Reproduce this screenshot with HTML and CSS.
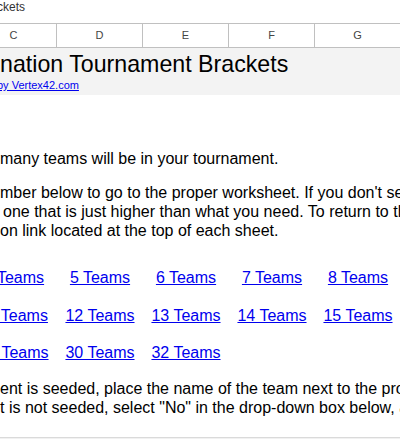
FILE: index.html
```html
<!DOCTYPE html>
<html lang="en">
<head>
    <meta charset="UTF-8">
    <meta name="viewport" content="width=device-width, initial-scale=1.0">
    <title>Single Elimination Tournament Brackets</title>
    <link rel="stylesheet" href="styles.css">
</head>
<body>
    <div class="doc-title"><span>ckets</span></div>

    <div class="sheet">
        <!-- column letters -->
        <div class="col-head">
            <div class="col">C</div>
            <div class="col">D</div>
            <div class="col">E</div>
            <div class="col">F</div>
            <div class="col">G</div>
        </div>

        <div class="banner">
            <h1 class="banner-title">nation Tournament Brackets</h1>
            <a class="banner-link" href="#">by Vertex42.com</a>
        </div>

        <div class="content">
            <p class="step step-one">many teams will be in your tournament.</p>

            <p class="step step-two">
                <span class="line">mber below to go to the proper worksheet. If you don't see the exact</span>
                <span class="line indent">one that is just higher than what you need. To return to this page</span>
                <span class="line">on link located at the top of each sheet.</span>
            </p>

            <div class="team-links">
                <a href="#">4 Teams</a>
                <a href="#">5 Teams</a>
                <a href="#">6 Teams</a>
                <a href="#">7 Teams</a>
                <a href="#">8 Teams</a>

                <a href="#">11 Teams</a>
                <a href="#">12 Teams</a>
                <a href="#">13 Teams</a>
                <a href="#">14 Teams</a>
                <a href="#">15 Teams</a>

                <a href="#">24 Teams</a>
                <a href="#">30 Teams</a>
                <a href="#">32 Teams</a>
            </div>

            <p class="step step-note">
                <span class="line">ent is seeded, place the name of the team next to the proper seed</span>
                <span class="line">t is not seeded, select "No" in the drop-down box below, and</span>
            </p>
        </div>
    </div>

    <div class="footer"></div>
</body>
</html>
```

FILE: styles.css
```css
html, body {
    margin: 0;
    height: 439px;
    overflow: hidden;
}
body {
    display: flex;
    flex-direction: column;
    font-family: "Liberation Sans", Arial, sans-serif;
    background: #fff;
    color: #000;
}
.doc-title {
    height: 23px;
    padding-top: 1px;
    box-sizing: border-box;
    font-size: 12px;
    line-height: 13px;
    color: #333;
    white-space: nowrap;
}
.doc-title span {
    margin-left: -3px;
}
.sheet {
    flex: 1;
    display: flex;
    flex-direction: column;
    overflow: hidden;
}
.col-head {
    display: grid;
    grid-template-columns: repeat(5, 86px);
    margin-left: -29px;
    border-top: 1px solid #c0c0c0;
    border-bottom: 1px solid #c0c0c0;
    height: 25px;
    box-sizing: border-box;
}
.col {
    border-right: 1px solid #c0c0c0;
    text-align: center;
    font-size: 11px;
    line-height: 23px;
    color: #444;
}
.banner {
    background: #f3f3f3;
    height: 47px;
    box-sizing: border-box;
    padding-top: 3px;
    white-space: nowrap;
}
.banner-title {
    margin: 0;
    font-size: 23.2px;
    font-weight: normal;
    line-height: 26px;
}
.banner-link {
    display: block;
    margin: 2px 0 0 -3px;
    font-size: 11px;
    line-height: 13px;
    color: #0000ee;
}
.content {
    flex: 1;
    white-space: nowrap;
}
.step {
    margin: 0;
    font-size: 16px;
    line-height: 19px;
}
.step .line {
    display: block;
}
.step .indent {
    padding-left: 3px;
}
.step-one {
    margin-top: 54px;
}
.step-two {
    margin-top: 15px;
}
.team-links {
    display: grid;
    grid-template-columns: repeat(5, 86px);
    row-gap: 18.5px;
    margin: 28px 0 0 -29px;
    font-size: 16px;
    line-height: 19px;
}
.team-links a {
    text-align: center;
    color: #0000ee;
}
.step-note {
    margin-top: 17px;
}
.footer {
    height: 2px;
    box-sizing: border-box;
    border-top: 1px solid #dadada;
    background: #f1f1f1;
}
```
